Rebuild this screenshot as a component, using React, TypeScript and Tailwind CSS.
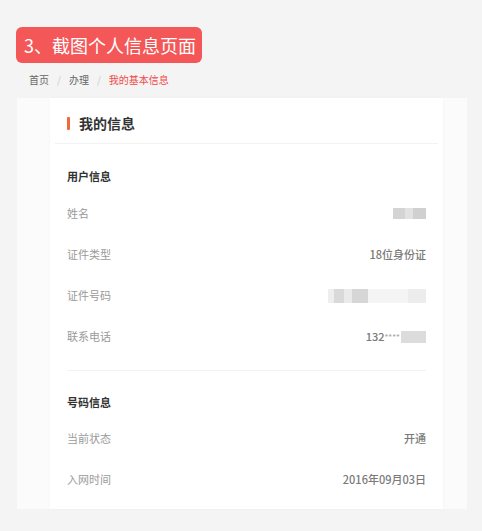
import React from "react";

const font = { fontFamily: '"Noto Sans CJK SC", "Noto Sans", sans-serif' };

function Blur({ cells }: { cells: { w: number; c: string }[] }) {
  return (
    <div className="flex h-[11px]">
      {cells.map((cell, i) => (
        <div key={i} style={{ width: cell.w, background: cell.c }} />
      ))}
    </div>
  );
}

function Row({ label, children }: { label: string; children: React.ReactNode }) {
  return (
    <div className="flex h-[41px] items-center justify-between">
      <span className="text-[11px] text-[#9a9a9a]">{label}</span>
      <div className="flex items-center text-[11px] font-medium text-[#7a7a7a]">{children}</div>
    </div>
  );
}

export default function App() {
  return (
    <div className="min-h-[531px] w-[482px] bg-[#f4f4f4]" style={font}>
      <div className="h-[27px]" />
      <div className="ml-[16px] flex h-[36px] w-[186px] items-center rounded-[6px] bg-[#f45757] pl-[8px] text-[18px] text-white">
        3、截图个人信息页面
      </div>
      <div className="ml-[29px] flex h-[32px] items-center gap-[8px] text-[10px]">
        <span className="text-[#666]">首页</span>
        <span className="text-[#ccc]">/</span>
        <span className="text-[#666]">办理</span>
        <span className="text-[#ccc]">/</span>
        <span className="text-[#f04848]">我的基本信息</span>
      </div>
      <div className="ml-[17px] mt-[3px] flex h-[411px] w-[450px] bg-[#fbfbfb] pl-[33px] pr-[24px]">
        <div className="flex-1 bg-white shadow-[0_0_4px_rgba(0,0,0,0.03)]">
          <div className="mx-[5px] flex h-[46px] items-center border-b border-[#f2f2f2] pl-[12px] pt-[6px]">
            <div className="h-[13px] w-[3px] rounded-[1px] bg-[#f2683a]" />
            <span className="ml-[9px] text-[14px] font-bold text-[#333]">我的信息</span>
          </div>
          <div className="px-[17px]">
            <div className="mt-[22px] flex h-[20px] items-center text-[11px] font-bold text-[#333]">用户信息</div>
            <div className="mt-[7px]">
              <Row label="姓名">
                <Blur cells={[{ w: 12, c: "#d4d4d4" }, { w: 8, c: "#e2e2e2" }, { w: 13, c: "#d0d0d0" }]} />
              </Row>
              <Row label="证件类型">
                <span>18位身份证</span>
              </Row>
              <Row label="证件号码">
                <div className="flex h-[14px] items-stretch">
                  <div className="w-[6px] bg-[#eeeeee]" />
                  <div className="w-[10px] bg-[#d9d9d9]" />
                  <div className="w-[8px] bg-[#eaeaea]" />
                  <div className="w-[16px] bg-[#d6d6d6]" />
                  <div className="w-[40px] bg-[#f4f4f4]" />
                  <div className="w-[18px] bg-[#ececec]" />
                </div>
              </Row>
              <Row label="联系电话">
                <span className="font-medium">132</span>
                <span className="text-[8px] leading-none text-[#aaa]">****</span>
                <div className="ml-[1px] h-[12px] w-[25px] bg-[#dcdcdc]" />
              </Row>
            </div>
            <div className="mt-[13px] border-t border-[#f2f2f2]" />
            <div className="mt-[21px] flex h-[20px] items-center text-[11px] font-bold text-[#333]">号码信息</div>
            <div className="mt-[6px]">
              <Row label="当前状态">
                <span>开通</span>
              </Row>
              <Row label="入网时间">
                <span>2016年09月03日</span>
              </Row>
            </div>
          </div>
        </div>
      </div>
    </div>
  );
}
